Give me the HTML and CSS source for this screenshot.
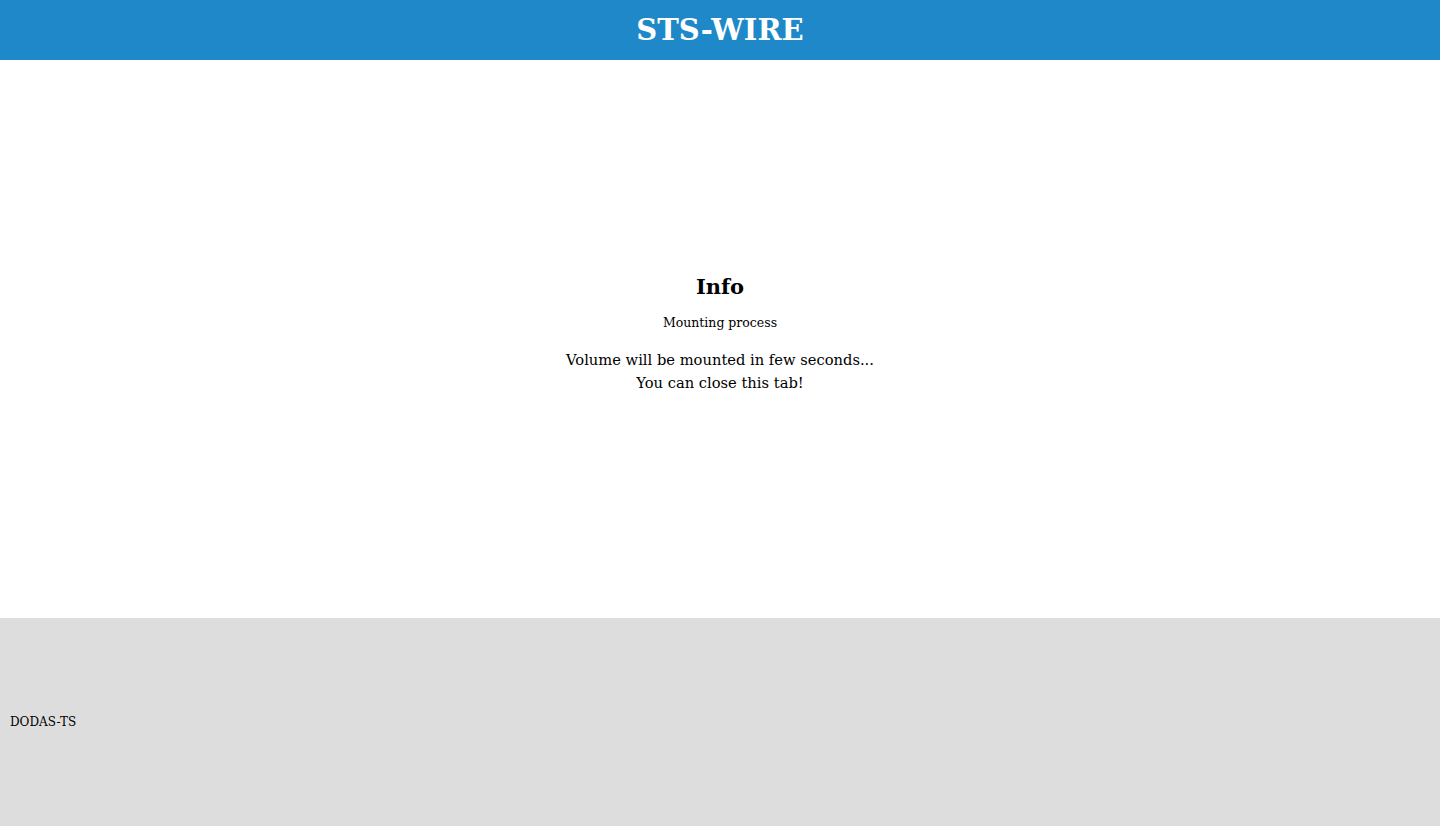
FILE: index.html
```html
<!DOCTYPE html>
<html lang="en">
<head>
<meta charset="utf-8">
<title>STS-WIRE</title>
<link rel="stylesheet" href="styles.css">
</head>
<body>
<div class="page">
  <header class="topbar">
    <h1 class="brand">STS-WIRE</h1>
  </header>
  <main class="content">
    <h2 class="title">Info</h2>
    <p class="subtitle">Mounting process</p>
    <p class="message">Volume will be mounted in few seconds...<br>You can close this tab!</p>
  </main>
  <footer class="footer">
    <span class="footer-text">DODAS-TS</span>
  </footer>
</div>
</body>
</html>
```

FILE: styles.css
```css
html, body {
  margin: 0;
  padding: 0;
}
body {
  font-family: "DejaVu Serif", "Liberation Serif", serif;
  color: #000;
  background: #fff;
}
.page {
  display: flex;
  flex-direction: column;
  height: 826px;
}
.topbar {
  height: 60px;
  background: #1e88c8;
  display: flex;
  align-items: center;
  justify-content: center;
}
.brand {
  margin: 0;
  color: #fff;
  font-size: 29px;
  font-weight: 700;
  letter-spacing: 0;
}
.content {
  flex: 1;
  display: flex;
  flex-direction: column;
  align-items: center;
  justify-content: center;
  text-align: center;
  padding-bottom: 12px;
}
.title {
  margin: 0;
  font-size: 21px;
  font-weight: 700;
  line-height: 30px;
}
.subtitle {
  margin: 12px 0 0;
  font-size: 12.5px;
  line-height: 18px;
}
.message {
  margin: 16px 0 0;
  font-size: 14.7px;
  line-height: 23px;
}
.footer {
  height: 208px;
  background: #dddddd;
  display: flex;
  align-items: center;
  padding-left: 10px;
}
.footer-text {
  font-size: 12px;
}
```
